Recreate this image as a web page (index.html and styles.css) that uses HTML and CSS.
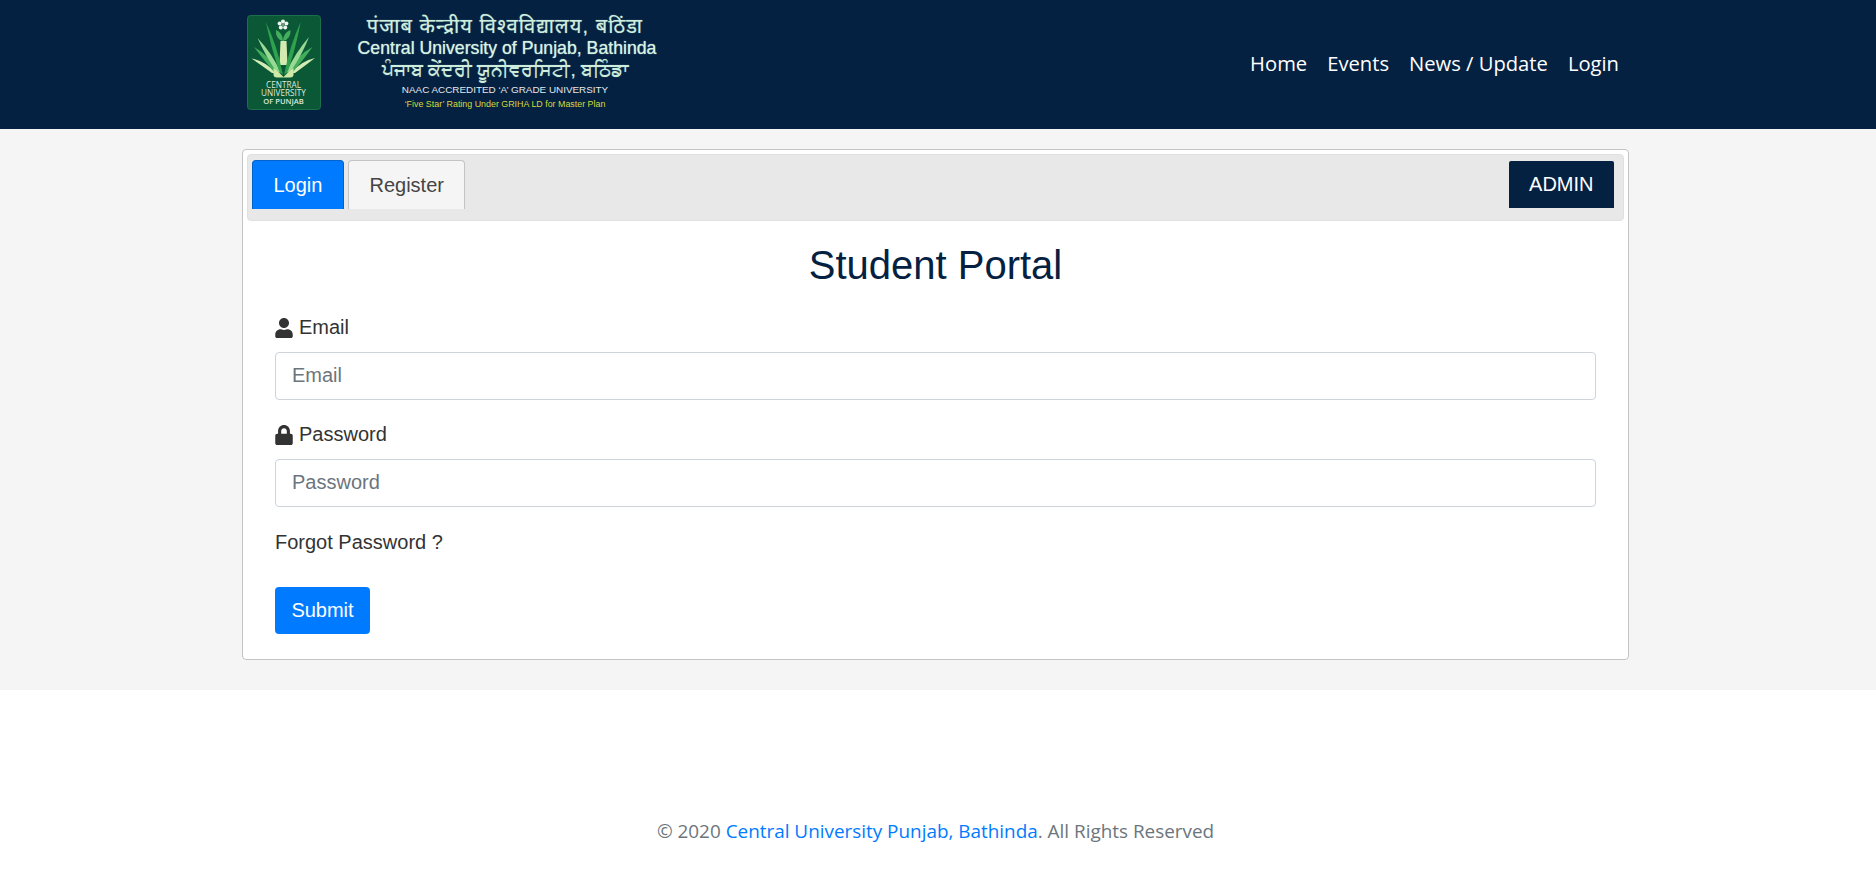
FILE: index.html
```html
<!DOCTYPE html>
<html lang="en">
<head>
<meta charset="utf-8">
<title>Student Portal</title>
<link rel="stylesheet" href="styles.css">
</head>
<body>
<header class="site-header">
  <a class="brand" href="#">
    <svg class="crest" viewBox="0 0 74 95" width="74" height="95" role="img" aria-label="Central University of Punjab crest">
      <rect x="0.5" y="0.5" width="73" height="94" rx="3" fill="#0b5837" stroke="#1c6f4b"/>
      <g fill="#eef5ee">
        <circle cx="36" cy="6.5" r="2"/><circle cx="39.4" cy="8.5" r="2"/><circle cx="38.2" cy="12.4" r="2"/>
        <circle cx="33.8" cy="12.4" r="2"/><circle cx="32.6" cy="8.5" r="2"/>
      </g>
      <circle cx="36" cy="10" r="1.8" fill="#6f9a80"/>
      <path d="M36 26 Q28 24 29 15 Q36 18 36 26Z" fill="#45ad5e"/>
      <path d="M36 26 Q44 24 43.5 15 Q36 18 36 26Z" fill="#45ad5e"/>
      <path d="M33.5 26 H39.5 L40.5 50 H32.5Z" fill="#d3ebb0"/>
      <path d="M4.5 43.5 Q18 46 29 58 L25 58 Q14 50 4.5 43.5Z" fill="#d3ecb3"/>
      <path d="M68 43 Q54 46 44 58 L48 58 Q59 50 68 43Z" fill="#d3ecb3"/>
      <path d="M7 32 Q22 40 32 58 L27 57 Q16 44 7 32Z" fill="#42ad5a"/>
      <path d="M65.5 32 Q50 40 41 58 L46 57 Q57 44 65.5 32Z" fill="#42ad5a"/>
      <path d="M10.5 23 Q25 38 34 58 L29 56 Q18 40 10.5 23Z" fill="#9ad994"/>
      <path d="M62 22 Q48 38 39 58 L44 56 Q55 40 62 22Z" fill="#9ad994"/>
      <path d="M18.7 7 Q30 30 36 60 L32 56 Q24 32 18.7 7Z" fill="#2fa24e"/>
      <path d="M53.7 7 Q43 30 37 60 L41 56 Q49 32 53.7 7Z" fill="#2fa24e"/>
      <path d="M26.5 53 Q33 58 36.5 62 Q40 58 46.5 53 V60 Q46 62.5 43 62.5 H30 Q27 62.5 26.5 60Z" fill="#cfe8a6"/>
      <text class="crest-text" x="36.5" y="72.5">CENTRAL</text>
      <text class="crest-text" x="36.5" y="81">UNIVERSITY</text>
      <text class="crest-text small" x="36.5" y="89">OF PUNJAB</text>
    </svg>
    <span class="brand-text">
      <span class="brand-hi">पंजाब केन्द्रीय विश्वविद्यालय, बठिंडा</span>
      <span class="brand-en">Central University of Punjab, Bathinda</span>
      <span class="brand-pa">ਪੰਜਾਬ ਕੇਂਦਰੀ ਯੂਨੀਵਰਸਿਟੀ, ਬਠਿੰਡਾ</span>
      <span class="brand-naac">NAAC ACCREDITED ‘A’ GRADE UNIVERSITY</span>
      <span class="brand-griha">‘Five Star’ Rating Under GRIHA LD for Master Plan</span>
    </span>
  </a>
  <nav class="site-nav">
    <a href="#">Home</a>
    <a href="#">Events</a>
    <a href="#">News / Update</a>
    <a href="#">Login</a>
  </nav>
</header>

<main class="page">
  <section class="card">
    <div class="card-head">
      <div class="tabs">
        <a class="tab tab-active" href="#">Login</a>
        <a class="tab" href="#">Register</a>
      </div>
      <a class="admin" href="#">ADMIN</a>
    </div>
    <form class="card-body">
      <h1 class="title">Student Portal</h1>
      <div class="field">
        <label class="label" for="email">
          <svg class="icon" viewBox="0 0 448 512"><path d="M224 256c70.7 0 128-57.3 128-128S294.7 0 224 0 96 57.3 96 128s57.3 128 128 128zm89.6 32h-16.7c-22.2 10.2-46.9 16-72.9 16s-50.6-5.8-72.9-16h-16.7C60.2 288 0 348.2 0 422.4V464c0 26.5 21.5 48 48 48h352c26.5 0 48-21.5 48-48v-41.6c0-74.2-60.2-134.4-134.4-134.4z"/></svg>
          Email
        </label>
        <input class="input" id="email" type="text" placeholder="Email">
      </div>
      <div class="field">
        <label class="label" for="password">
          <svg class="icon" viewBox="0 0 448 512"><path d="M400 224h-24v-72C376 68.2 307.8 0 224 0S72 68.2 72 152v72H48c-26.5 0-48 21.5-48 48v192c0 26.5 21.5 48 48 48h352c26.5 0 48-21.5 48-48V272c0-26.5-21.5-48-48-48zm-104 0H152v-72c0-39.7 32.3-72 72-72s72 32.3 72 72v72z"/></svg>
          Password
        </label>
        <input class="input" id="password" type="password" placeholder="Password">
      </div>
      <a class="forgot" href="#">Forgot Password ?</a>
      <button class="submit" type="button">Submit</button>
    </form>
  </section>
</main>

<footer class="site-footer">
  © 2020 <a href="#">Central University Punjab, Bathinda</a>. All Rights Reserved
</footer>
</body>
</html>
```
FILE: styles.css
```css
* { box-sizing: border-box; }
html, body { margin: 0; padding: 0; }
body {
  background: #fff;
  color: #333;
  font-family: "Liberation Sans", Arial, sans-serif;
  font-size: 20px;
  height: 896px;
  overflow: hidden;
}
a { text-decoration: none; color: inherit; }

.site-header {
  height: 129px;
  background: #052142;
  display: flex;
  align-items: flex-start;
  justify-content: space-between;
  padding: 15px 257px 0 247px;
}
.brand { display: flex; gap: 29px; }
.crest { display: block; flex: none; }
.crest-text {
  fill: #dbe9dd;
  font-family: "Open Sans", sans-serif;
  font-size: 8.2px;
  text-anchor: middle;
}
.crest-text.small { font-size: 7.6px; font-weight: 600; }
.brand-text {
  width: 310px;
  display: flex;
  flex-direction: column;
  align-items: center;
  font-family: "Liberation Sans", "Noto Sans", sans-serif;
}
.brand-hi, .brand-pa {
  font-size: 19.2px;
  line-height: 25px;
  color: #cdeedd;
  white-space: nowrap;
  text-shadow: 0 0 1px rgba(205, 238, 221, 0.6);
}
.brand-hi { margin-top: -1px; font-size: 20px; letter-spacing: 1.1px; }
.brand-en {
  margin-left: 4px;
  font-size: 17.7px;
  line-height: 18px;
  color: #d5f3e4;
  white-space: nowrap;
  text-shadow: 0 0 1px rgba(213, 243, 228, 0.8);
}
.brand-naac {
  margin-top: 1px;
  font-size: 9.9px;
  line-height: 14px;
  color: #e4e8ea;
  white-space: nowrap;
}
.brand-griha {
  font-size: 8.9px;
  line-height: 14px;
  color: #d6d83a;
  white-space: nowrap;
}
.site-nav {
  display: flex;
  gap: 20px;
  margin-top: 35px;
  font-family: "Open Sans", sans-serif;
  font-size: 20.2px;
  line-height: 27px;
  color: #fff;
}

.page {
  height: 561px;
  background: #f5f5f5;
  padding: 20px 0 0 242px;
}
.card {
  width: 1387px;
  height: 511px;
  background: #fff;
  border: 1px solid #c4c4c4;
  border-radius: 4px;
  padding: 4px;
}
.card-head {
  height: 67px;
  background: #e8e8e8;
  border: 1px solid #e0e0e0;
  border-radius: 4px;
  padding: 5px 9px 0 4px;
  display: flex;
  align-items: flex-start;
  justify-content: space-between;
}
.tabs { display: flex; gap: 4px; }
.tab {
  height: 49px;
  padding: 0 20.5px;
  display: flex;
  align-items: center;
  background: #f5f5f5;
  border: 1px solid #c4c4c4;
  border-bottom: 0;
  border-radius: 4px 4px 0 0;
  color: #444;
  font-size: 20px;
}
.tab-active {
  background: #007bff;
  border-color: #0062cc;
  color: #fff;
}
.admin {
  height: 47px;
  margin-top: 1px;
  padding: 0 20.5px;
  display: flex;
  align-items: center;
  background: #052142;
  border-radius: 2px 2px 0 0;
  color: #fff;
  font-size: 20px;
}
.card-body {
  padding: 0 28px;
  display: flex;
  flex-direction: column;
  align-items: flex-start;
}
.title {
  align-self: stretch;
  margin: 20px 0 25px;
  text-align: center;
  font-size: 40px;
  line-height: 48px;
  font-weight: 400;
  color: #052142;
}
.field { align-self: stretch; margin-bottom: 21.5px; }
.label {
  display: flex;
  align-items: center;
  gap: 6px;
  height: 27px;
  margin-bottom: 11px;
}
.icon { width: 18px; height: 20px; fill: #333; display: block; }
.input {
  display: block;
  width: 100%;
  height: 47.5px;
  padding: 0 16px;
  background: #fff;
  border: 1px solid #ced4da;
  border-radius: 4px;
  font-family: inherit;
  font-size: 20px;
  color: #495057;
}
.input::placeholder { color: #6c757d; opacity: 1; }
.forgot { line-height: 27px; margin-top: 1px; }
.submit {
  margin-top: 31px;
  height: 47px;
  width: 95px;
  border: 0;
  border-radius: 4px;
  background: #007bff;
  color: #fff;
  font-family: inherit;
  font-size: 20px;
  cursor: pointer;
}
.site-footer {
  padding-top: 128px;
  padding-right: 5px;
  text-align: center;
  font-family: "Open Sans", sans-serif;
  font-size: 18.9px;
  line-height: 27px;
  color: #6c757d;
}
.site-footer a { color: #007bff; }
```
